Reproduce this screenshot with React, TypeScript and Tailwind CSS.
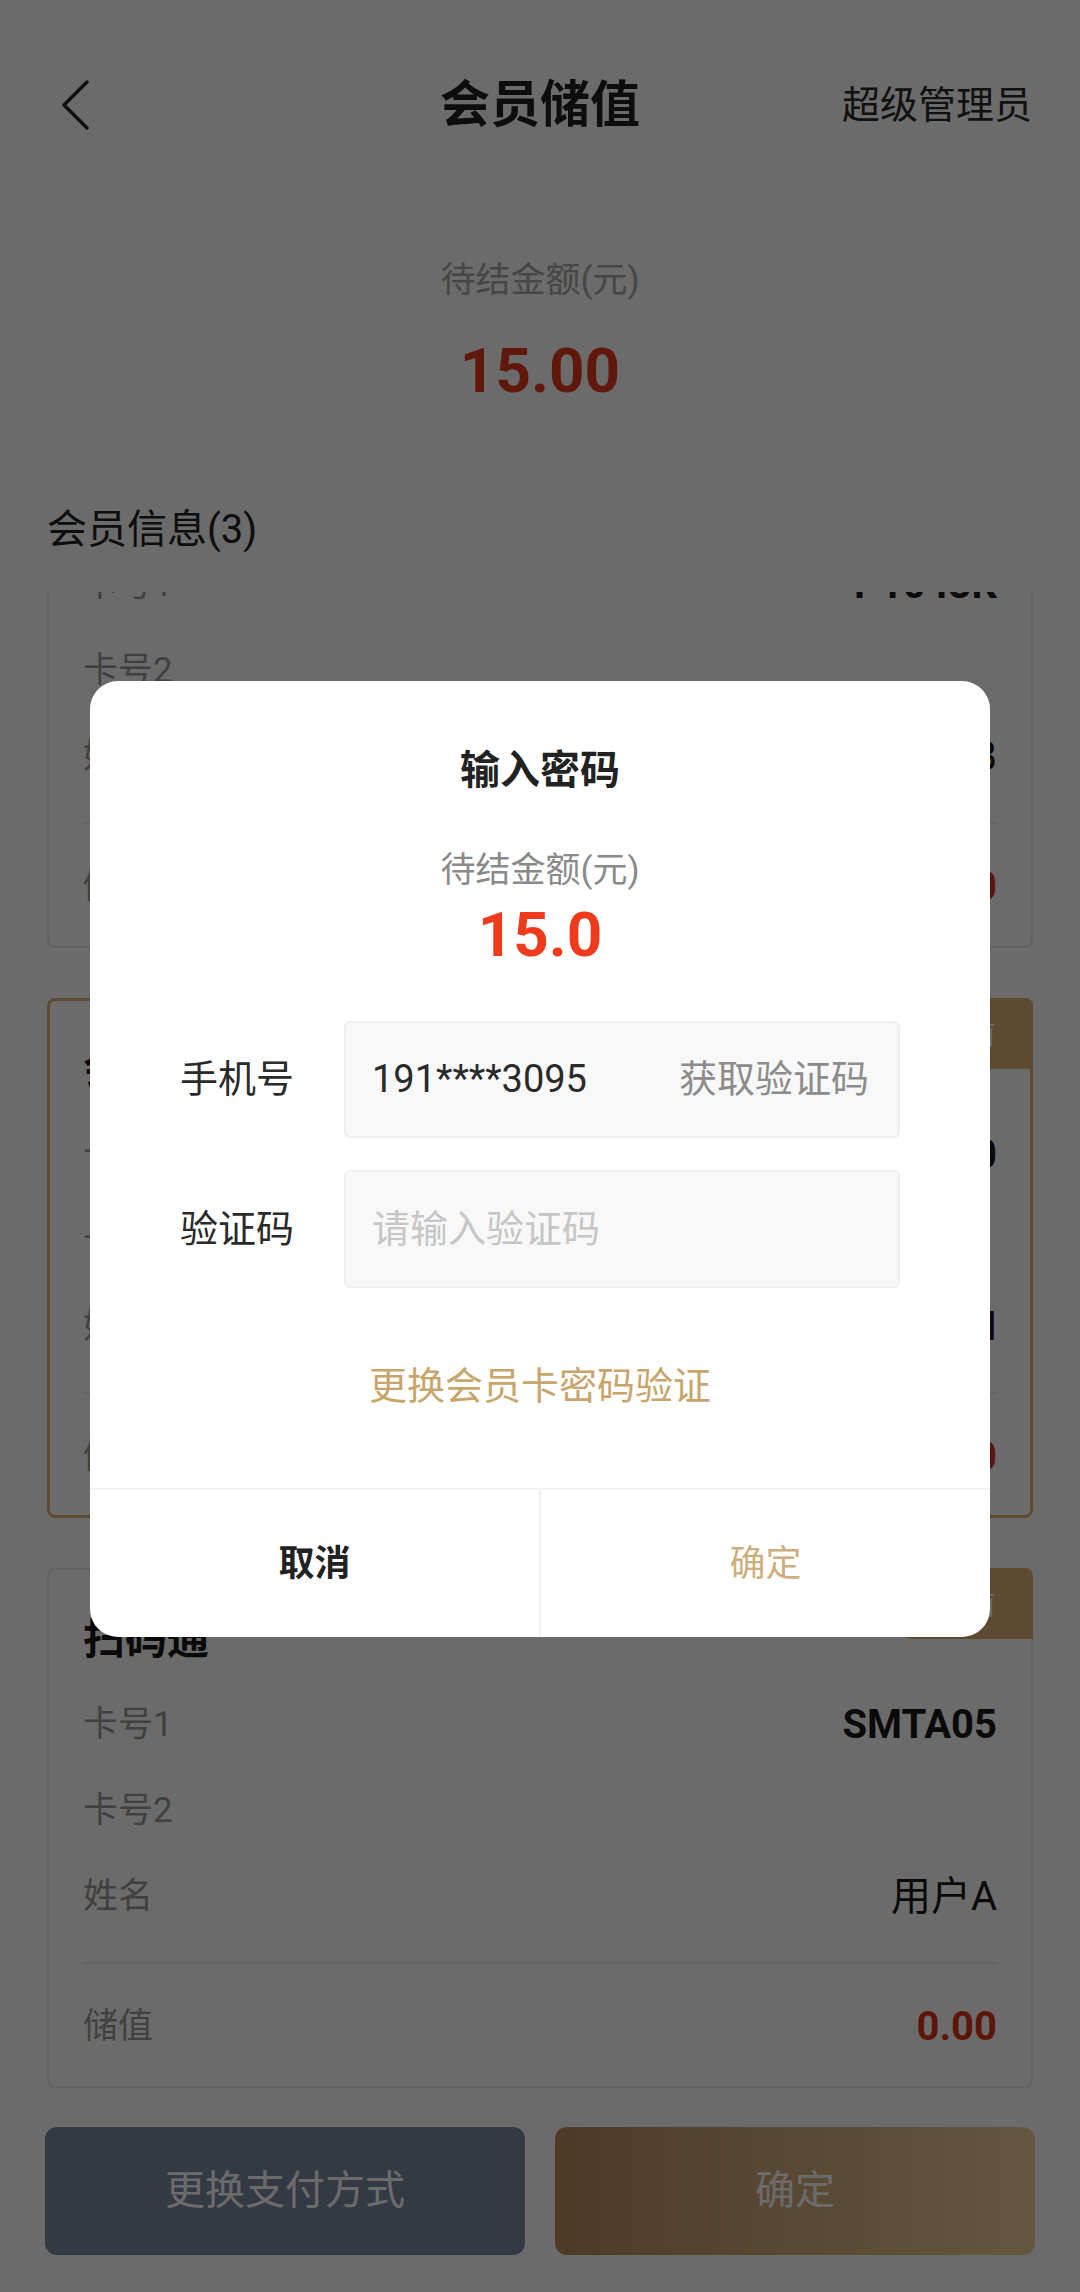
import React from "react";

type Card = {
  title: string;
  no1: string;
  no2: string;
  name: string;
  value: string;
  selected?: boolean;
  badge?: boolean;
};

const cards: Card[] = [
  { title: "会员卡", no1: "P1043K", no2: "", name: "用户B", value: "0.00" },
  { title: "会员卡", no1: "HY2020", no2: "", name: "用户H", value: "0.00", selected: true, badge: true },
  { title: "扫码通", no1: "SMTA05", no2: "", name: "用户A", value: "0.00", badge: true },
];

function Row({ label, value, valueClass }: { label: string; value: string; valueClass: string }) {
  return (
    <div className="flex h-[86px] items-center justify-between">
      <span className="text-[35px] text-[#9a9a9a]">{label}</span>
      <span className={valueClass}>{value}</span>
    </div>
  );
}

function MemberCard({ c }: { c: Card }) {
  return (
    <div
      className={
        c.selected
          ? "relative h-[520px] shrink-0 rounded-[8px] border-[3px] border-[#e0b072] bg-white px-[33px] pt-[25px]"
          : "relative h-[520px] shrink-0 rounded-[8px] border-2 border-[#e6e6e6] bg-white px-[34px] pt-[26px]"
      }
    >
      {c.badge && (
        <div
          className={
            c.selected
              ? "absolute right-[-3px] top-[-3px] flex h-[71px] w-[135px] items-center justify-center rounded-bl-[16px] rounded-tr-[8px] bg-[#e0b072] text-[30px] text-white"
              : "absolute right-[-2px] top-[-2px] flex h-[71px] w-[135px] items-center justify-center rounded-bl-[16px] rounded-tr-[8px] bg-[#e0b072] text-[30px] text-white"
          }
        >
          当前
        </div>
      )}
      <div className="flex h-[86px] items-center">
        <span className="text-[42px] font-bold text-[#1a1a1a]">{c.title}</span>
      </div>
      <Row label="卡号1" value={c.no1} valueClass="text-[40px] font-bold text-[#1a1a1a]" />
      <Row label="卡号2" value={c.no2} valueClass="text-[40px] font-bold text-[#1a1a1a]" />
      <Row label="姓名" value={c.name} valueClass="text-[40px] text-[#1a1a1a]" />
      <div className="mt-[22px] h-[2px] bg-[#eeeeee]" />
      <div className="mt-[20px]">
        <Row label="储值" value={c.value} valueClass="text-[40px] font-bold text-[#dd3419]" />
      </div>
    </div>
  );
}

export default function App() {
  return (
    <div className="relative h-[2292px] w-[1080px] overflow-hidden bg-white font-[family-name:Roboto,'Noto_Sans_CJK_SC',sans-serif]">
      {/* Header */}
      <div className="grid h-[210px] grid-cols-[1fr_auto_1fr] items-center px-[48px]">
        <div className="pl-[13px]">
          <svg width="28" height="50" viewBox="0 0 28 50" fill="none">
            <polyline points="26,2 3,25 26,48" stroke="#2a2a2a" strokeWidth="3.5" strokeLinecap="round" strokeLinejoin="round" />
          </svg>
        </div>
        <div className="text-[50px] font-bold text-[#1f1f1f]">会员储值</div>
        <div className="justify-self-end text-[38px] text-[#2a2a2a]">超级管理员</div>
      </div>

      <div className="mt-[40px] flex h-[62px] items-center justify-center text-[35px] text-[#a6a6a6]">待结金额(元)</div>
      <div className="mt-[18px] flex h-[80px] items-center justify-center text-[62px] font-bold text-[#e23a1b]">15.00</div>

      <div className="mt-[90px] flex h-[60px] items-center px-[47px] text-[40px] text-[#222222]">会员信息(3)</div>

      {/* Member list (scrolled) */}
      <div className="mt-[32px] h-[1510px] overflow-hidden px-[47px]">
        <div className="mt-[-164px] flex flex-col gap-[50px]">
          {cards.map((c, i) => (
            <MemberCard key={i} c={c} />
          ))}
        </div>
      </div>

      {/* Footer buttons */}
      <div className="mt-[25px] flex gap-[30px] px-[45px]">
        <div className="flex h-[128px] flex-1 items-center justify-center rounded-[12px] bg-[#7c8aa2] text-[40px] text-white">
          更换支付方式
        </div>
        <div className="flex h-[128px] flex-1 items-center justify-center rounded-[12px] bg-gradient-to-r from-[#b88c5c] to-[#f0cf98] text-[40px] text-white">
          确定
        </div>
      </div>

      {/* Overlay + dialog */}
      <div className="absolute inset-0 flex justify-center bg-black/[0.58] pt-[681px]">
        <div className="flex h-[956px] w-[900px] flex-col overflow-hidden rounded-[28px] bg-white">
          <div className="mt-[62px] flex h-[56px] items-center justify-center text-[40px] font-bold text-[#222222]">输入密码</div>
          <div className="mt-[47px] flex h-[50px] items-center justify-center text-[35px] text-[#8a8a8a]">待结金额(元)</div>
          <div className="flex h-[76px] items-center justify-center text-[62px] font-bold text-[#ef3b1c]">15.0</div>

          <div className="mt-[49px] flex items-center gap-[50px] px-[90px]">
            <div className="w-[114px] text-[38px] text-[#2a2a2a]">手机号</div>
            <div className="flex h-[117px] flex-1 items-center justify-between rounded-[6px] border-2 border-[#efefef] bg-[#f8f8f8] pl-[26px] pr-[29px]">
              <span className="text-[38px] text-[#2a2a2a]">191****3095</span>
              <span className="text-[38px] text-[#8c8c8c]">获取验证码</span>
            </div>
          </div>

          <div className="mt-[32px] flex items-center gap-[50px] px-[90px]">
            <div className="w-[114px] text-[38px] text-[#2a2a2a]">验证码</div>
            <div className="flex h-[118px] flex-1 items-center rounded-[6px] border-2 border-[#efefef] bg-[#f8f8f8] pl-[26px]">
              <span className="text-[38px] text-[#c6c6c6]">请输入验证码</span>
            </div>
          </div>

          <div className="mt-[68px] flex h-[60px] items-center justify-center text-[38px] text-[#c9a56b]">更换会员卡密码验证</div>

          <div className="mt-[72px] flex h-[149px] border-t-2 border-[#f2f2f2]">
            <div className="flex flex-1 items-center justify-center text-[36px] font-bold text-[#222222]">取消</div>
            <div className="flex flex-1 items-center justify-center border-l-2 border-[#f2f2f2] text-[36px] text-[#cdaf7c]">确定</div>
          </div>
        </div>
      </div>
    </div>
  );
}
